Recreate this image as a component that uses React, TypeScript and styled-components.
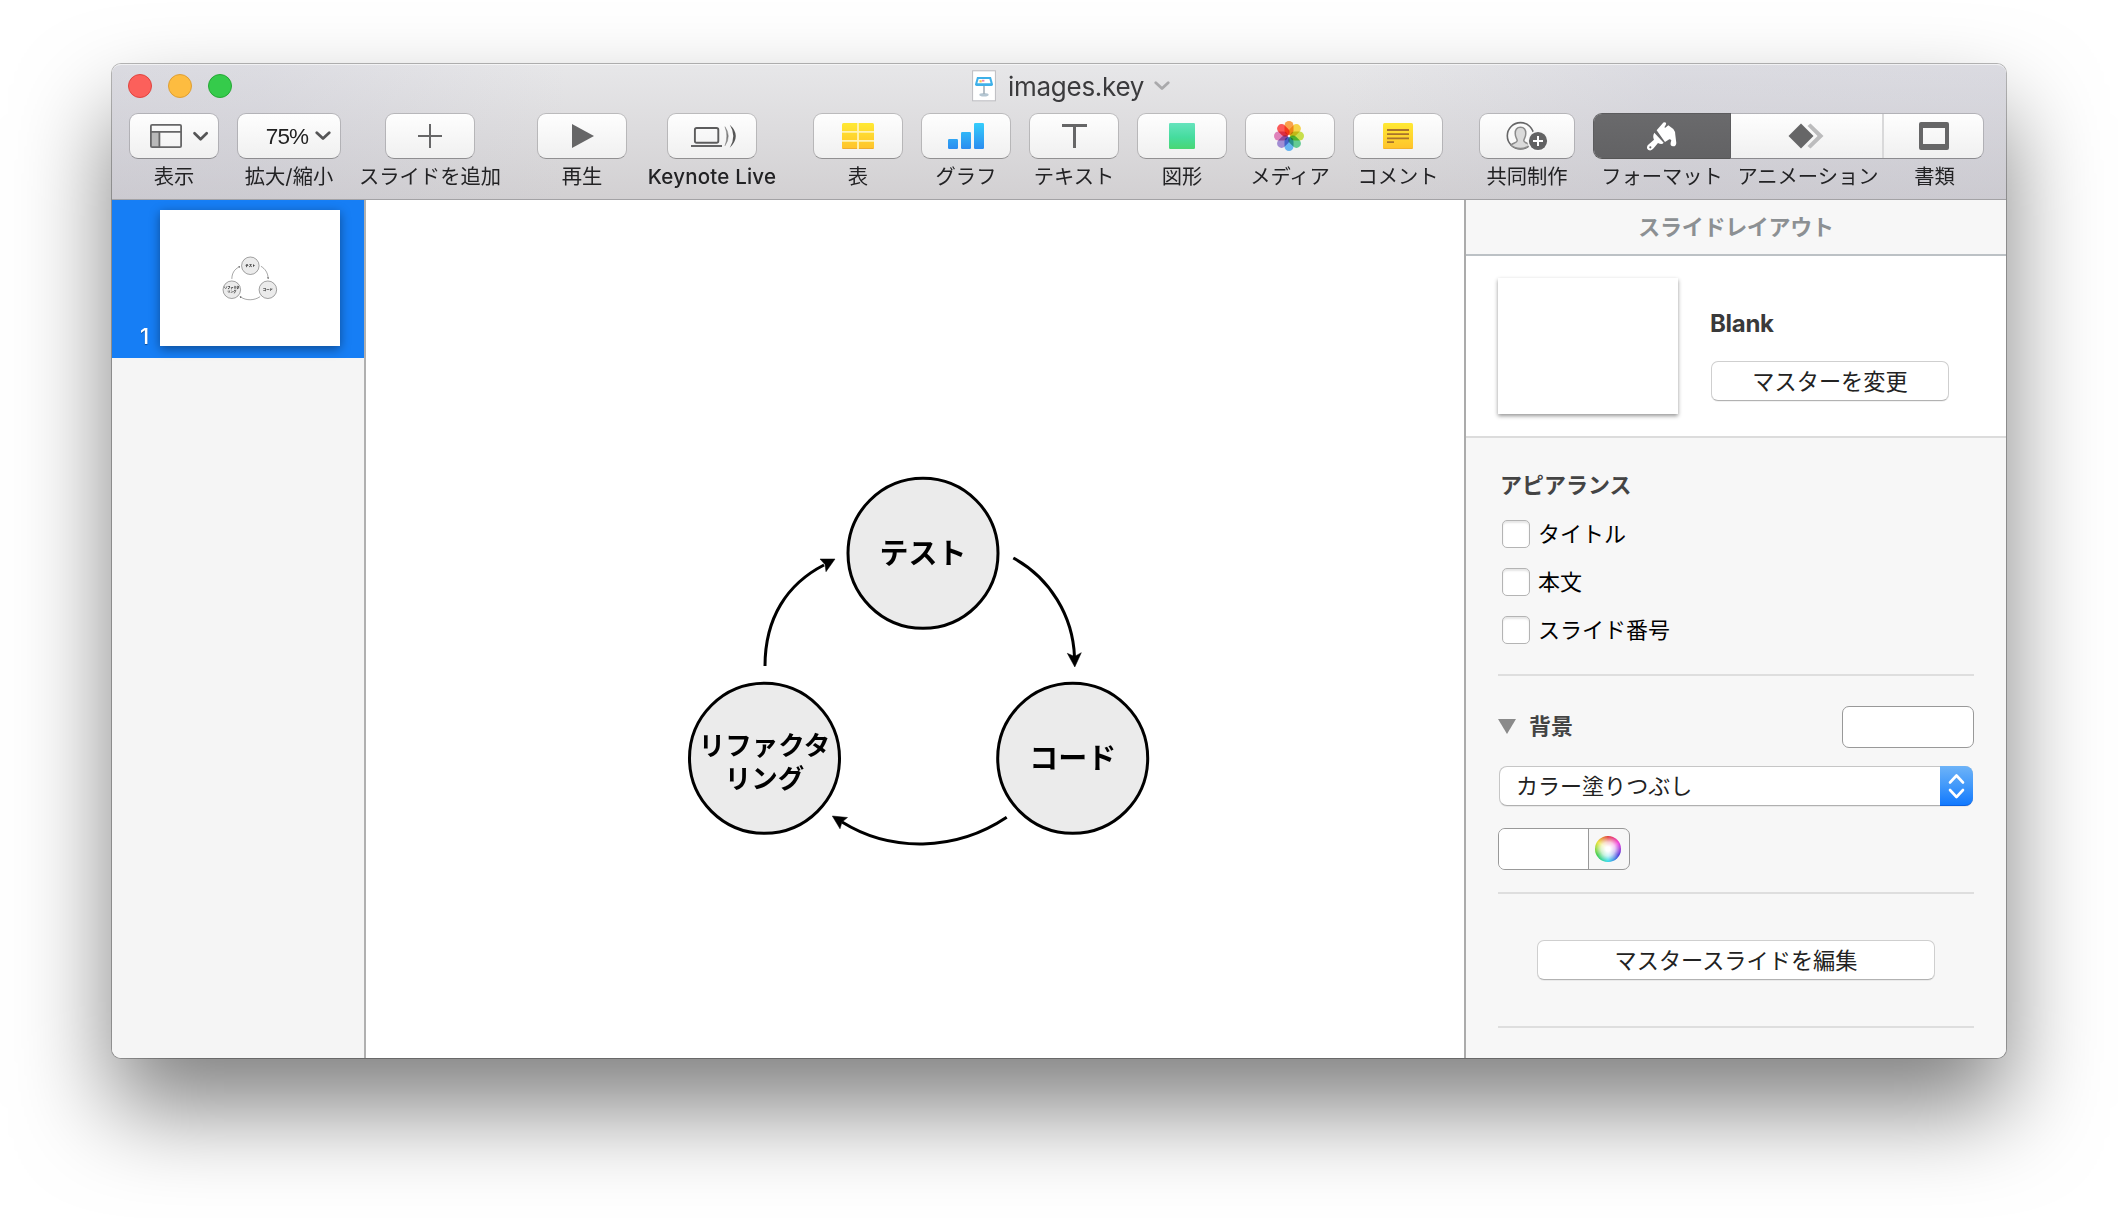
import React from "react";
import styled, { createGlobalStyle } from "styled-components";

const GlobalStyle = createGlobalStyle`
  *, *::before, *::after { box-sizing: border-box; }
  body {
    margin: 0;
    background: #fff;
    color: #222;
    font-family: Inter, "Noto Sans CJK JP", sans-serif;
    overflow: hidden;
  }
`;

const Desktop = styled.main`
  width: 2118px;
  height: 1218px;
  padding: 64px 112px 160px;
`;

const Window = styled.section`
  height: 994px;
  display: flex;
  flex-direction: column;
  border-radius: 9px;
  box-shadow: 0 0 0 1px rgba(0, 0, 0, 0.27), 0 50px 94px rgba(0, 0, 0, 0.5);
`;

const Header = styled.header`
  height: 136px;
  flex: none;
  border-radius: 9px 9px 0 0;
  border-bottom: 1px solid #a3a2a5;
  box-shadow: inset 0 2px 0 -1px rgba(255, 255, 255, 0.6);
  background: linear-gradient(90deg, rgba(190, 190, 206, 0.3) 0%, rgba(190, 190, 206, 0.26) 8%, rgba(196, 196, 212, 0) 24%, rgba(196, 196, 212, 0) 65%, rgba(190, 190, 206, 0.28) 82%, rgba(190, 190, 206, 0.3) 100%),
    linear-gradient(#e7e7e9, #d2d0d2);
`;

const TitleBar = styled.div`
  height: 49px;
  padding: 0 16px;
  display: grid;
  grid-template-columns: 844px auto 1fr;
  align-items: start;
`;

const Lights = styled.div`
  display: flex;
  gap: 16px;
  padding-top: 10px;
`;

const Light = styled.span<{ $fill: string; $edge: string }>`
  width: 24px;
  height: 24px;
  border-radius: 50%;
  background: ${(p) => p.$fill};
  border: 1px solid ${(p) => p.$edge};
`;

const Title = styled.div`
  display: flex;
  align-items: center;
  height: 44px;
  color: #3b3b3d;
`;

const TitleText = styled.span`
  margin: 2px 10px 0 12px;
  font-size: 26px;
  line-height: 32px;
  letter-spacing: -0.28px;
`;

const Toolbar = styled.div`
  display: flex;
  padding-left: 17px;
`;

const Tool = styled.div<{ $w: number; $gap?: number }>`
  width: ${(p) => p.$w}px;
  margin-left: ${(p) => p.$gap ?? 0}px;
  flex: none;
  display: flex;
  flex-direction: column;
  align-items: center;
`;

const ToolButton = styled.button<{ $active?: boolean; $edge?: "first" | "middle" | "last" }>`
  width: 100%;
  height: 46px;
  padding: 0;
  display: flex;
  align-items: center;
  justify-content: center;
  border: 1px solid ${(p) => (p.$active ? "#5c5c5e" : "rgba(0, 0, 0, 0.16)")};
  border-bottom-color: ${(p) => (p.$active ? "#555" : "rgba(0, 0, 0, 0.33)")};
  border-right-width: ${(p) => (p.$edge === "middle" ? 0 : 1)}px;
  border-left-width: ${(p) => (p.$edge === "middle" || p.$edge === "last" ? 0 : 1)}px;
  border-radius: ${(p) =>
    p.$edge === "first" ? "9px 0 0 9px" : p.$edge === "middle" ? "0" : p.$edge === "last" ? "0 9px 9px 0" : "9px"};
  background: ${(p) => (p.$active ? "linear-gradient(#6a6a6c, #626264)" : "linear-gradient(#fefefe, #f0f0f0)")};
  background-clip: padding-box;
  color: #222;
`;

const ToolLabel = styled.span<{ $latin?: boolean }>`
  margin-top: 6px;
  white-space: nowrap;
  font-size: ${(p) => (p.$latin ? 20.5 : 20.3)}px;
  line-height: 24px;
  font-weight: ${(p) => (p.$latin ? 500 : 400)};
  letter-spacing: ${(p) => (p.$latin ? 0.2 : 0)}px;
  color: #222224;
`;

const Divider = styled.span`
  width: 2px;
  height: 44px;
  flex: none;
  background: #d9d9da;
`;

const ZoomValue = styled.span`
  width: 44px;
  margin: 1px 6px 0 18px;
  font-size: 22.5px;
  font-weight: 500;
  letter-spacing: -0.9px;
`;

const Body = styled.div`
  flex: 1;
  display: flex;
  min-height: 0;
`;

const Navigator = styled.nav`
  width: 254px;
  flex: none;
  border-right: 2px solid #b0b0b0;
  border-radius: 0 0 0 9px;
  background: #f5f5f5;
`;

const SlideItem = styled.div`
  height: 158px;
  padding: 10px 24px 12px 28px;
  display: flex;
  align-items: flex-end;
  justify-content: space-between;
  background: #167ef5;
`;

const SlideNumber = styled.span`
  margin-bottom: -1px;
  font-size: 22px;
  line-height: 22px;
  font-weight: 500;
  color: #fff;
  text-shadow: 0 1px 1px rgba(0, 0, 0, 0.4);
`;

const Thumb = styled.div`
  width: 180px;
  height: 136px;
  flex: none;
  background: #fff;
  box-shadow: 0 3px 10px rgba(0, 0, 0, 0.4);
`;

const Canvas = styled.div`
  width: 1098px;
  flex: none;
  background: #fff;
`;

const Art = styled.svg`
  display: block;
`;

const Inspector = styled.aside`
  flex: 1;
  min-width: 0;
  border-left: 2px solid #ababab;
  border-radius: 0 0 9px 0;
  background: #f7f7f7;
`;

const PanelTitle = styled.h2`
  margin: 0;
  height: 56px;
  border-bottom: 2px solid #bcc1c5;
  font-size: 22px;
  line-height: 55px;
  font-weight: 700;
  text-align: center;
  letter-spacing: -0.3px;
  color: #8c9093;
`;

const Master = styled.div`
  height: 182px;
  padding: 22px 0 0 32px;
  display: flex;
  gap: 33px;
  border-bottom: 2px solid #dcdcdc;
  background: #fff;
`;

const MasterPreview = styled.div`
  width: 180px;
  height: 136px;
  background: #fff;
  box-shadow: 0 2px 4px rgba(0, 0, 0, 0.42);
`;

const MasterInfo = styled.div`
  padding-top: 31px;
`;

const MasterName = styled.div`
  height: 52px;
  margin-left: -1px;
  line-height: 30px;
  font-size: 24px;
  font-weight: 700;
  letter-spacing: -0.3px;
  color: #3a3a3a;
`;

const PushButton = styled.button<{ $w: number }>`
  width: ${(p) => p.$w}px;
  height: 40px;
  padding: 0;
  display: block;
  border: 1px solid #cfcfcf;
  border-bottom-color: #b2b2b2;
  border-radius: 7px;
  background: #fff;
  box-shadow: 0 1px 0 rgba(0, 0, 0, 0.05);
  font: inherit;
  font-size: 22.2px;
  line-height: 37px;
  color: #222;
`;

const Section = styled.div<{ $h: number; $top: number }>`
  height: ${(p) => p.$h}px;
  margin: 0 32px;
  padding-top: ${(p) => p.$top}px;
  border-bottom: 2px solid #dedede;
`;

const Heading = styled.h3`
  margin: 0;
  font-size: 22px;
  line-height: 30px;
  font-weight: 700;
  color: #444;
`;

const CheckList = styled.div`
  padding-top: 10px;
`;

const AppearanceHeading = styled(Heading)`
  margin-left: 2px;
`;

const CheckRow = styled.label`
  display: flex;
  align-items: center;
  gap: 8px;
  height: 48px;
  padding-left: 4px;
  font-size: 22px;
  line-height: 30px;
  color: #000;
`;

const CheckBox = styled.span`
  width: 28px;
  height: 28px;
  border: 1px solid #b4b4b4;
  border-radius: 5px;
  background: #fff;
  box-shadow: inset 0 2px 2px rgba(0, 0, 0, 0.1);
`;

const FillHeader = styled.div`
  display: flex;
  align-items: center;
  height: 42px;
`;

const FillHeading = styled(Heading)`
  margin-bottom: 3px;
`;

const Disclosure = styled.span`
  margin: 0 13px 2px 0;
  border: 9px solid transparent;
  border-top: 15px solid #8a8a8a;
  border-bottom: 0;
`;

const Swatch = styled.span`
  width: 132px;
  height: 42px;
  margin-left: auto;
  border: 1px solid #999;
  border-radius: 7px;
  background: #fff;
`;

const Select = styled.div`
  width: 474px;
  height: 40px;
  margin: 18px 0 22px 1px;
  padding-left: 16px;
  display: flex;
  justify-content: space-between;
  border: 1px solid #c6c6c6;
  border-bottom-color: #b0b0b0;
  border-radius: 8px;
  background: #fff;
  box-shadow: 0 1px 0 rgba(0, 0, 0, 0.06);
  font-size: 22px;
  line-height: 39px;
  color: #222;
`;

const Stepper = styled.span`
  width: 33px;
  height: 40px;
  margin: -1px -1px 0 0;
  border-radius: 0 8px 8px 0;
  background: linear-gradient(#6db3f8, #4299fa 50%, #1279fe);
  border-bottom: 1px solid #0c62e0;
`;

const ColorWell = styled.div`
  width: 132px;
  height: 42px;
  display: flex;
  border: 1px solid #999;
  border-radius: 7px;
  background: #f7f7f7;
  overflow: hidden;
`;

const ColorValue = styled.span`
  width: 90px;
  flex: none;
  border-right: 1px solid #999;
  background: #fff;
`;

const ColorWheel = styled.span`
  width: 26px;
  height: 26px;
  margin: 7px 0 0 6px;
  border-radius: 50%;
  background: radial-gradient(circle, #fff 12%, rgba(255, 255, 255, 0.75) 38%, rgba(255, 255, 255, 0) 72%),
    conic-gradient(#e02a2a, #f02ad8 60deg, #3a2ad8 120deg, #22d8e8 180deg, #2ac83a 240deg, #e8e022 305deg, #e02a2a);
`;

const CenterRow = styled.div`
  display: flex;
  justify-content: center;
`;

const G = "#666667";

const Chevron = ({ color = "#555556" }: { color?: string }) => (
  <svg width="16" height="10" viewBox="0 0 16 10">
    <path d="M1.8 1.8 8 7.6 14.2 1.8" fill="none" stroke={color} strokeWidth="2.8" strokeLinecap="round" strokeLinejoin="round" />
  </svg>
);

const Icon = ({ w = 88, children }: { w?: number; children: React.ReactNode }) => (
  <svg width={w} height="44" viewBox={`0 0 ${w} 44`}>
    {children}
  </svg>
);

const Gradients = () => (
  <defs>
    <linearGradient id="yellow" x1="0" y1="0" x2="0" y2="1">
      <stop offset="0" stopColor="#ffe934" />
      <stop offset="1" stopColor="#ffc32b" />
    </linearGradient>
    <linearGradient id="blue" x1="0" y1="9" x2="0" y2="35" gradientUnits="userSpaceOnUse">
      <stop offset="0" stopColor="#35cdfb" />
      <stop offset="1" stopColor="#2b8cf0" />
    </linearGradient>
    <linearGradient id="green" x1="0" y1="0" x2="0" y2="1">
      <stop offset="0" stopColor="#66e3bd" />
      <stop offset="0.55" stopColor="#45dc9e" />
      <stop offset="1" stopColor="#49d673" />
    </linearGradient>
  </defs>
);

const ViewIcon = () => (
  <Icon>
    <path d="M21 18h8.5v15H21z" fill="#b9b9b9" />
    <rect x="20.9" y="10.9" width="30.2" height="22.2" rx="1.2" fill="none" stroke={G} strokeWidth="1.8" />
    <path d="M21 17.8h30M29.4 18v15" stroke={G} strokeWidth="1.8" />
    <path d="m64.5 19.2 6.1 6 6.1-6" fill="none" stroke="#555556" strokeWidth="2.7" strokeLinecap="round" strokeLinejoin="round" />
  </Icon>
);

const AddIcon = () => (
  <Icon>
    <path d="M32 22h24M44 10v24" stroke={G} strokeWidth="2" />
  </Icon>
);

const PlayIcon = () => (
  <Icon>
    <path d="m34 10 22 12-22 12z" fill={G} />
  </Icon>
);

const LiveIcon = () => (
  <Icon>
    <rect x="26.9" y="14" width="23.4" height="14.8" rx="1.8" fill="none" stroke="#5c5c5d" strokeWidth="1.9" />
    <path d="M23 32h31" stroke="#5c5c5d" strokeWidth="1.9" />
    <path d="M57 12.7q6.6 9.3 0 19 3.6-9.5 0-19z" fill="#777" stroke="#888" strokeWidth=".5" />
    <path d="M61.8 10.8q12 11 0 23 7-12 0-23z" fill="#555" />
  </Icon>
);

const TableIcon = () => (
  <Icon>
    <Gradients />
    <rect x="28" y="9" width="32" height="26" rx="1.5" fill="url(#yellow)" />
    <path d="M28.5 34.5h31" stroke="#eaa630" strokeWidth=".8" />
    <path d="M28 17.8h32M28 26.8h32M44 9v26" stroke="#fff3b8" strokeWidth="1.8" />
  </Icon>
);

const ChartIcon = () => (
  <Icon>
    <rect x="26" y="25" width="10" height="10" rx="1.2" fill="url(#blue)" />
    <rect x="39" y="18" width="10" height="17" rx="1.2" fill="url(#blue)" />
    <rect x="52" y="9" width="10" height="26" rx="1.2" fill="url(#blue)" />
  </Icon>
);

const TextIcon = () => (
  <Icon>
    <path d="M32 11.6h25M44.5 12v22" stroke={G} strokeWidth="3" fill="none" />
  </Icon>
);

const ShapeIcon = () => (
  <Icon>
    <rect x="31" y="9" width="26" height="26" rx="1.2" fill="url(#green)" />
  </Icon>
);

const petals = ["#f99a3c", "#f6cf38", "#c3dc3c", "#57c78a", "#5aaef0", "#9a83cf", "#dd77b4", "#fb4b4b"];

const Petal = styled.rect`
  mix-blend-mode: multiply;
`;

const PetalGroup = styled.g`
  isolation: isolate;
`;

const MediaIcon = () => (
  <Icon>
    <PetalGroup>
      {petals.map((c, i) => (
        <Petal
          key={c}
          x="38.5"
          y="7"
          width="9"
          height="14"
          rx="4.5"
          fill={c}
          opacity="0.92"
          transform={`rotate(${i * 45} 43 22)`}
        />
      ))}
    </PetalGroup>
  </Icon>
);

const CommentIcon = () => (
  <Icon>
    <rect x="29" y="9" width="30" height="26" rx="1.5" fill="url(#yellow)" />
    <path d="M29.5 34.5h29" stroke="#f0ae2c" strokeWidth=".8" />
    <path d="M33 16h22M33 20.2h22M33 24.3h22M33 28.2h7" stroke="#a8732c" strokeWidth="1.8" />
  </Icon>
);

const PeopleIcon = () => (
  <Icon w={94}>
    <circle cx="40.5" cy="21.8" r="13.2" fill="#fafafa" stroke={G} strokeWidth="1.6" />
    <path
      d="M31 31c2-2.3 6-2 6.2-4.2.1-2-1.9-3-1.9-6.5-.4-4.7 1.7-7 5.2-7s5.600 2.300 5.200 7c0 3.500-2 4.500-1.900 6.500.2 2.200 4.200 1.900 6.200 4.200-5 4.600-14 4.600-19 0z"
      fill="#dadada"
      stroke="#8b8b8b"
      strokeWidth="1.5"
    />
    <circle cx="58" cy="27" r="10.6" fill="#f6f6f6" />
    <circle cx="58" cy="27" r="9.1" fill="#626263" />
    <path d="M53 27h10M58 22v10" stroke="#fff" strokeWidth="2" />
  </Icon>
);

const BrushIcon = () => (
  <svg width="33.3" height="32" viewBox="524 60 100 96">
    <path
      d="M559 91 576 71Q581 64 587 68 589 71 582 82L585 83 594 76 609 87Q615 94 615 104L618 129Q617 140 608 139 599 138 601 128L603 121Q600 117 597 118L584 126z"
      fill="#fff"
    />
    <path d="M552 98 580 128Q575 135 563 129L550 145Q543 154 534 150 527 145 532 136L551 119Q546 108 552 98z" fill="#fff" />
    <circle cx="540" cy="142" r="3.2" fill="#656567" />
  </svg>
);

const AnimateIcon = () => (
  <Icon w={150}>
    <path d="m75.5 12 3-2.600L91.500 22l-13 12.600-3-2.600L85.600 22z" fill="#bcbcbd" />
    <path d="M56.5 22 69 9.600 81.500 22 69 34.400z" fill={G} />
  </Icon>
);

const DocumentIcon = () => (
  <Icon w={98}>
    <path fillRule="evenodd" d="M36 8h26a2 2 0 0 1 2 2v24a2 2 0 0 1-2 2H36a2 2 0 0 1-2-2V10a2 2 0 0 1 2-2zm2 6v16h22V14z" fill={G} />
  </Icon>
);

const KeynoteFileIcon = () => (
  <svg width="24" height="32" viewBox="0 0 24 32">
    <rect x=".6" y=".8" width="22.8" height="30" fill="#fff" stroke="#bcbcc0" strokeWidth="1" />
    <ellipse cx="12" cy="24.7" rx="4.7" ry="1.8" fill="#b4c6d2" />
    <path d="M12 15v9" stroke="#a3b0b9" strokeWidth="1.6" />
    <path d="M5 7h14l2 7.200q0 1.800-1.500 1.800h-15Q3 16 3 14.200z" fill="#3eb0e8" />
    <path d="M6.600 8.900h10.800l1.200 4.300H5.400z" fill="#fff" />
    <path d="M7.500 10.200h2.200v2.200H7.500z" fill="#f8c34a" />
    <path d="M10 9.800h2.400v1.800H10z" fill="#ef7fae" />
  </svg>
);

const nodes = [
  { x: 923, y: 553.3, size: 29, dy: 0, lines: ["テスト"] },
  { x: 1072.7, y: 758.3, size: 29, dy: 0, lines: ["コード"] },
  { x: 764.5, y: 758.3, size: 26.5, dy: 3, lines: ["リファクタ", "リング"] },
];

const Diagram = ({ box, w, h }: { box: string; w: number; h: number }) => (
  <Art width={w} height={h} viewBox={box}>
    <g fill="none" stroke="#000" strokeWidth="3">
      <path d="M1013.3 558C1050 578 1073 616 1074.500 657" />
      <path d="M1006.7 817.300C955 852 890 852 842 822" />
      <path d="M765 666C765 618 787 584 824 565" />
    </g>
    <path d="M1074.8 667 1067.300 653.300 1074.500 656.500 1081.300 652.700z" stroke="#000" strokeWidth=".5" />
    <path d="M832.3 816 847.500 817.500 842 822 840 828.800z" stroke="#000" strokeWidth=".5" />
    <path d="M835 559 820 559 825 564.500 826 571.700z" stroke="#000" strokeWidth=".5" />
    {nodes.map((n) => (
      <g key={n.x}>
        <circle cx={n.x} cy={n.y} r="75" fill="#ebebeb" stroke="#000" strokeWidth="3" />
        {n.lines.map((line, i) => (
          <text
            key={line}
            x={n.x}
            y={n.y + n.dy + n.size * 0.37 + (i - (n.lines.length - 1) / 2) * 33}
            textAnchor="middle"
            fontFamily="'Noto Sans CJK JP', sans-serif"
            fontWeight="700"
            fontSize={n.size}
          >
            {line}
          </text>
        ))}
      </g>
    ))}
  </Art>
);

const tools = [
  { label: "スライドを追加", gap: 44, icon: <AddIcon /> },
  { label: "再生", gap: 62, icon: <PlayIcon /> },
  { label: "Keynote Live", gap: 40, icon: <LiveIcon />, latin: true },
  { label: "表", gap: 56, icon: <TableIcon /> },
  { label: "グラフ", gap: 18, icon: <ChartIcon /> },
  { label: "テキスト", gap: 18, icon: <TextIcon /> },
  { label: "図形", gap: 18, icon: <ShapeIcon /> },
  { label: "メディア", gap: 18, icon: <MediaIcon /> },
  { label: "コメント", gap: 18, icon: <CommentIcon /> },
];

const placeholders = ["タイトル", "本文", "スライド番号"];

export default function App() {
  return (
    <>
      <GlobalStyle />
      <Desktop>
        <Window>
          <Header>
            <TitleBar>
              <Lights>
                <Light $fill="#fc605b" $edge="#e0443f" />
                <Light $fill="#fdbc40" $edge="#de9f34" />
                <Light $fill="#35cb4b" $edge="#25a835" />
              </Lights>
              <Title>
                <KeynoteFileIcon />
                <TitleText>images.key</TitleText>
                <Chevron color="#a9a9ab" />
              </Title>
            </TitleBar>
            <Toolbar>
              <Tool $w={90}>
                <ToolButton><ViewIcon /></ToolButton>
                <ToolLabel>表示</ToolLabel>
              </Tool>
              <Tool $w={104} $gap={18}>
                <ToolButton>
                  <ZoomValue>75%</ZoomValue>
                  <Chevron />
                </ToolButton>
                <ToolLabel>拡大/縮小</ToolLabel>
              </Tool>
              {tools.map((t) => (
                <Tool key={t.label} $w={90} $gap={t.gap}>
                  <ToolButton>{t.icon}</ToolButton>
                  <ToolLabel $latin={t.latin}>{t.label}</ToolLabel>
                </Tool>
              ))}
              <Tool $w={96} $gap={36}>
                <ToolButton><PeopleIcon /></ToolButton>
                <ToolLabel>共同制作</ToolLabel>
              </Tool>
              <Tool $w={138} $gap={18}>
                <ToolButton $active $edge="first"><BrushIcon /></ToolButton>
                <ToolLabel>フォーマット</ToolLabel>
              </Tool>
              <Tool $w={154}>
                <ToolButton $edge="middle">
                  <AnimateIcon />
                  <Divider />
                </ToolButton>
                <ToolLabel>アニメーション</ToolLabel>
              </Tool>
              <Tool $w={99}>
                <ToolButton $edge="last"><DocumentIcon /></ToolButton>
                <ToolLabel>書類</ToolLabel>
              </Tool>
            </Toolbar>
          </Header>
          <Body>
            <Navigator>
              <SlideItem>
                <SlideNumber>1</SlideNumber>
                <Thumb>
                  <Diagram box="151 77 1538 1162" w={180} h={136} />
                </Thumb>
              </SlideItem>
            </Navigator>
            <Canvas>
              <Diagram box="366 200 1098 858" w={1098} h={858} />
            </Canvas>
            <Inspector>
              <PanelTitle>スライドレイアウト</PanelTitle>
              <Master>
                <MasterPreview />
                <MasterInfo>
                  <MasterName>Blank</MasterName>
                  <PushButton $w={238}>マスターを変更</PushButton>
                </MasterInfo>
              </Master>
              <Section $h={238} $top={32}>
                <AppearanceHeading>アピアランス</AppearanceHeading>
                <CheckList>
                  {placeholders.map((name) => (
                    <CheckRow key={name}><CheckBox />{name}</CheckRow>
                  ))}
                </CheckList>
              </Section>
              <Section $h={218} $top={30}>
                <FillHeader>
                  <Disclosure />
                  <FillHeading>背景</FillHeading>
                  <Swatch />
                </FillHeader>
                <Select>
                  カラー塗りつぶし
                  <Stepper>
                    <svg width="33" height="40" viewBox="0 0 33 40">
                      <path d="m10 16.500 6.500-7 6.500 7M10 24l6.500 7 6.500-7" fill="none" stroke="#fff" strokeWidth="2.6" strokeLinecap="round" strokeLinejoin="round" />
                    </svg>
                  </Stepper>
                </Select>
                <ColorWell>
                  <ColorValue />
                  <ColorWheel />
                </ColorWell>
              </Section>
              <Section $h={134} $top={46}>
                <CenterRow>
                  <PushButton $w={398}>マスタースライドを編集</PushButton>
                </CenterRow>
              </Section>
            </Inspector>
          </Body>
        </Window>
      </Desktop>
    </>
  );
}
